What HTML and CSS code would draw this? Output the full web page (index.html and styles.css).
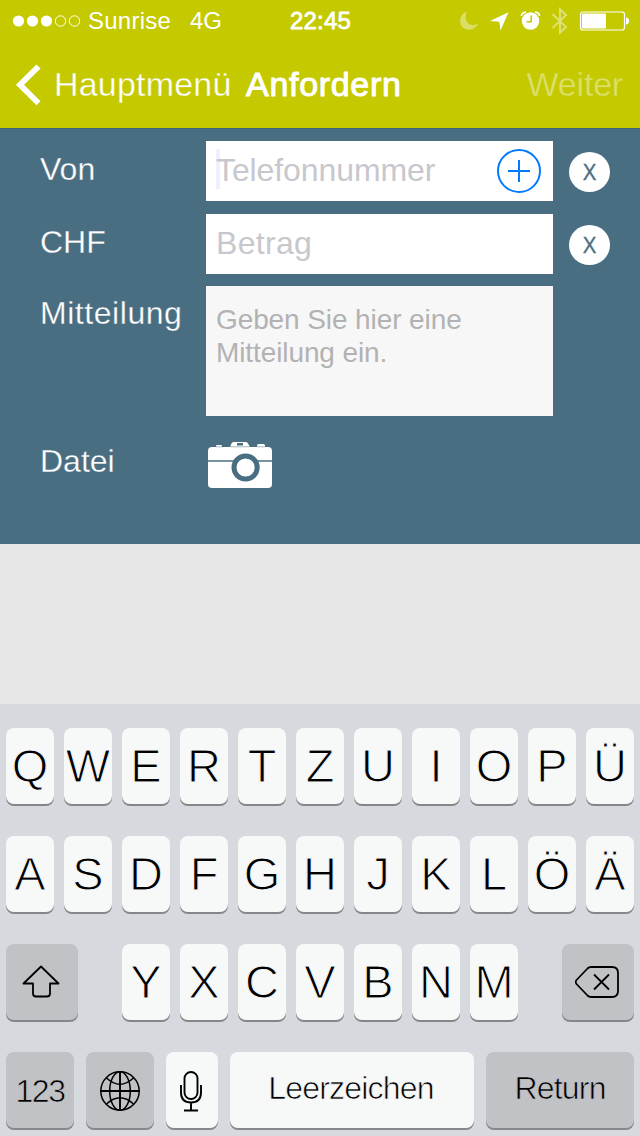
FILE: index.html
```
<!DOCTYPE html>
<html lang="de">
<head>
<meta charset="utf-8">
<title>Anfordern</title>
<link rel="stylesheet" href="styles.css">
</head>
<body>
<header class="header">
  <div class="status">
    <svg class="signal" width="70" height="14" viewBox="0 0 70 14"><g fill="#fff"><circle cx="6.5" cy="7" r="5.6"/><circle cx="20.5" cy="7" r="5.6"/><circle cx="34.5" cy="7" r="5.6"/></g><g fill="none" stroke="#fff"><circle cx="48.5" cy="7" r="5.2"/><circle cx="62.5" cy="7" r="5.2"/></g></svg>
    <span class="carrier">Sunrise</span>
    <span class="network">4G</span>
    <span class="clock">22:45</span>
    <svg class="indicators" width="172" height="30" viewBox="458 5.500 172 30">
      <path fill="#fff" fill-opacity=".4" d="M467 11C457.500 14 457.500 29 469 29.200C473.500 29 477 26.500 478.200 22.500C474 26.500 467.500 24.500 466 19.500C465.200 16 466 13 467 11Z"/>
      <path fill="#fff" d="M508.500 11.700L500.500 30L499.300 21.200L490 20.500Z"/>
      <circle cx="530.500" cy="20.500" r="8.700" fill="#fff"/>
      <path fill="none" stroke="#fff" stroke-width="1.800" d="M521.500 15.500Q521.500 12 526 11.600M535 11.600Q539.500 12 539.500 15.500"/>
      <path fill="none" stroke="#c4c900" stroke-width="1.500" d="M531.200 15V21.300H526.500"/>
      <path fill="none" stroke="#fff" stroke-opacity=".45" stroke-width="2" d="M552.500 13.500L566 26.500L560 32.200V8.800L566 14.500L552.500 27.500"/>
      <rect x="580.500" y="11.500" width="44" height="18" rx="2.500" fill="none" stroke="#fff" stroke-width="1.200"/>
      <rect x="582" y="13" width="24" height="15" rx="1" fill="#fff"/>
      <path fill="#fff" d="M626 17Q629 17 629 20.500T626 24Z"/>
    </svg>
  </div>
  <nav class="nav">
    <svg class="back" width="26" height="42" viewBox="0 0 26 42"><path fill="none" stroke="#fff" stroke-width="5.800" d="M23.500 2.500L5 20.800L23.500 39.200"/></svg>
    <span class="parent">Hauptmenü</span>
    <h1 class="title">Anfordern</h1>
    <span class="next">Weiter</span>
  </nav>
</header>

<main class="form">
  <div class="row">
    <label class="label">Von</label>
    <div class="field"><span class="caret"></span><span class="hint phone">Telefonnummer</span>
      <svg class="add" width="46" height="46" viewBox="0 0 46 46"><g fill="none" stroke="#007aff" stroke-width="2"><circle cx="23" cy="23" r="21"/><path d="M12 23H34M23 12V34"/></g></svg>
    </div>
    <span class="clear">X</span>
  </div>
  <div class="row">
    <label class="label">CHF</label>
    <div class="field"><span class="hint amount">Betrag</span></div>
    <span class="clear">X</span>
  </div>
  <div class="row message-row">
    <label class="label wide">Mitteilung</label>
    <div class="message">Geben Sie hier eine<br>Mitteilung ein.</div>
  </div>
  <div class="row file-row">
    <label class="label">Datei</label>
    <svg class="camera" width="64" height="47" viewBox="0 0 64 47">
      <path fill="#fff" d="M4 5H60Q64 5 64 9V42Q64 46 60 46H4Q0 46 0 42V9Q0 5 4 5Z"/>
      <path fill="#fff" d="M8 5V4Q8 3 9 3H13Q14 3 14 4V5ZM22 5L23.500 1.500Q24 0 25.500 0H38Q39.500 0 40 1.500L42 5ZM49 5V3.500Q49 2 50.500 2H55.500Q57 2 57 3.500V5Z"/>
      <path stroke="#4a6e81" stroke-opacity=".5" d="M8 4.800H15M22 4.800H42M49 4.800H57"/>
      <path fill="#4a6e81" d="M29 1H35V3.500H29Z"/>
      <path stroke="#4a6e81" stroke-width="1.600" d="M0 19H64"/>
      <circle cx="37.600" cy="25.500" r="11.600" fill="#fff" stroke="#4a6e81" stroke-width="5"/>
    </svg>
  </div>
</main>

<section class="keyboard">
  <div class="keys">
    <span class="key">Q</span><span class="key">W</span><span class="key">E</span><span class="key">R</span><span class="key">T</span><span class="key">Z</span><span class="key">U</span><span class="key">I</span><span class="key">O</span><span class="key">P</span><span class="key">Ü</span>
  </div>
  <div class="keys">
    <span class="key">A</span><span class="key">S</span><span class="key">D</span><span class="key">F</span><span class="key">G</span><span class="key">H</span><span class="key">J</span><span class="key">K</span><span class="key">L</span><span class="key">Ö</span><span class="key">Ä</span>
  </div>
  <div class="keys">
    <span class="key dark shift"><svg width="38" height="34" viewBox="0 0 38 34"><path fill="none" stroke="#000" stroke-width="1.800" stroke-linejoin="round" d="M19 1.500L1.500 18.500H11V28.500Q11 31.500 14 31.500H25Q28 31.500 28 28.500V18.500H36.500Z"/></svg></span>
    <span class="key">Y</span><span class="key">X</span><span class="key">C</span><span class="key">V</span><span class="key">B</span><span class="key">N</span><span class="key">M</span>
    <span class="key dark erase"><svg width="44" height="34" viewBox="0 0 44 34"><path fill="none" stroke="#000" stroke-width="1.800" stroke-linejoin="round" d="M16 2H37Q43 2 43 8V26Q43 32 37 32H16Q14 32 12.500 30.500L1.500 19Q0 17 1.500 15L12.500 3.500Q14 2 16 2ZM19 9.500L34 24.500M34 9.500L19 24.500"/></svg></span>
  </div>
  <div class="keys bottom">
    <span class="key dark numbers">123</span>
    <span class="key dark globe"><svg width="42" height="42" viewBox="0 0 42 42"><g fill="none" stroke="#000" stroke-width="1.500"><circle cx="21" cy="21" r="19.200"/><ellipse cx="21" cy="21" rx="10.300" ry="19.200"/><path d="M7.500 8Q21 20.500 34.500 8M7.500 34Q21 21.500 34.500 34"/><path stroke-width="1.900" d="M1 21H41M21 1V41"/></g></svg></span>
    <span class="key mic"><svg width="24" height="42" viewBox="0 0 24 42"><g fill="none" stroke="#000" stroke-width="1.900"><rect x="5.500" y="2" width="13" height="27" rx="6.500"/><path d="M2 15V22.500Q2 32.500 12 32.500T22 22.500V15M12 32.500V40.500M5 40.500H19"/></g></svg></span>
    <span class="key space">Leerzeichen</span>
    <span class="key dark return">Return</span>
  </div>
</section>
</body>
</html>
```

FILE: styles.css
```
* { box-sizing: border-box; }
body {
  margin: 0;
  width: 640px;
  height: 1136px;
  overflow: hidden;
  display: flex;
  flex-direction: column;
  background: #e6e6e6;
  font-family: "Liberation Sans", Arial, sans-serif;
  color: #fff;
  white-space: nowrap;
}
svg { display: block; flex: none; }

.header { height: 128px; background: #c4c900; }
.status { height: 40px; display: flex; align-items: center; font-size: 24px; line-height: 40px; padding: 1px 10px 0 12px; }
.signal { margin-right: 6px; }
.carrier { width: 102px; letter-spacing: .25px; }
.network { width: 100px; }
.clock { letter-spacing: .2px; -webkit-text-stroke: .8px #fff; }
.indicators { margin-left: auto; }
.nav { height: 88px; display: flex; align-items: center; padding: 0 17px 0 15px; font-size: 34px; line-height: 88px; }
.back { margin-top: 2px; }
.parent { width: 192px; margin-left: 13px; letter-spacing: .2px; -webkit-text-stroke: .35px #c4c900; }
.title { margin: 0; font-size: 34px; font-weight: normal; letter-spacing: .7px; -webkit-text-stroke: 1px #fff; }
.next { margin-left: auto; color: #dce069; letter-spacing: -.2px; -webkit-text-stroke: .3px #c4c900; }

.form { height: 416px; background: #4a6e81; border-top: 1px solid #3d6478; padding: 12px 30px 0 40px; }
.row { display: flex; height: 60px; margin-bottom: 13px; }
.label { width: 166px; font-size: 32px; line-height: 56px; -webkit-text-stroke: .3px #4a6e81; }
.label.wide { line-height: 54px; letter-spacing: .55px; }
.field { position: relative; width: 347px; height: 60px; display: flex; align-items: center; background: #fff; padding: 0 11px 0 10px; color: #c7c7cd; font-size: 32px; }
.caret { position: absolute; left: 10px; top: 8px; width: 4px; height: 40px; background: #ecf0ff; }
.hint { position: relative; line-height: 56px; margin-bottom: 2px; }
.phone { letter-spacing: -.1px; }
.amount { letter-spacing: .3px; }
.add { margin-left: auto; }
.clear { width: 41px; height: 40px; margin: 11px 0 0 16px; border-radius: 50%; background: #fff; color: #4a6e81; font-family: "Open Sans", sans-serif; font-size: 22px; line-height: 38px; text-align: center; -webkit-text-stroke: .4px #4a6e81; }
.message-row { height: 130px; margin-top: -1px; margin-bottom: 20px; }
.message { width: 347px; height: 130px; background: #f7f7f7; color: #b2b2b2; font-size: 28px; line-height: 33px; padding: 17px 10px; letter-spacing: -.1px; }
.file-row { height: 60px; }
.file-row .label { line-height: 50px; }
.camera { margin: 6px 0 0 2px; }

.keyboard { margin-top: 160px; height: 432px; padding: 24px 6px 0; background: #d6d9dd; color: #000; }
.keys { display: flex; gap: 10px; height: 76px; margin-bottom: 32px; }
.key { flex: none; width: 48px; height: 76px; display: flex; justify-content: center; align-items: center; border-radius: 8px; background: #f7f9f9; box-shadow: 0 2px 0 #858689; font-size: 47px; line-height: 76px; -webkit-text-stroke: 1.1px #f7f9f9; }
.dark { background: #c1c2c6; -webkit-text-stroke-color: #c1c2c6; }
.shift { width: 72px; margin-right: 34px; padding-right: 2px; }
.erase { width: 72px; margin-left: 34px; padding-right: 2px; }
.bottom { gap: 12px; }
.numbers, .space, .return { font-size: 32px; letter-spacing: -.8px; -webkit-text-stroke-width: .7px; }
.numbers { width: 68px; letter-spacing: -1.4px; padding-top: 2px; }
.globe { width: 68px; padding-top: 2px; }
.mic { width: 52px; padding: 2px 2px 0 0; }
.space { width: 244px; padding: 0 2px 5px 0; }
.return { width: 148px; padding-bottom: 5px; }
```
